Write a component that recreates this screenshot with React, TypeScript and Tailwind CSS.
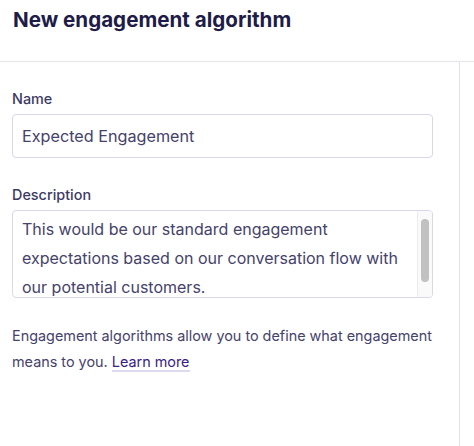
import React from "react";

const FONT = { fontFamily: "Inter, 'Noto Sans', sans-serif" };

export default function App() {
  return (
    <div className="flex h-[446px] w-[474px] flex-col overflow-hidden bg-white" style={FONT}>
      <header className="h-[62px] shrink-0 border-b border-[#e4e3ec] px-[13px] pt-[5px]">
        <h1 className="text-[20.6px] leading-[30px] font-bold text-[#201c47]">
          New engagement algorithm
        </h1>
      </header>

      <div className="flex flex-1">
        <main className="w-[460px] shrink-0 border-r border-[#e4e3ec] pt-[27px] pr-[26px] pl-[12px]">
          <label className="block text-[14.4px] leading-[20px] font-medium text-[#3d3a63]">
            Name
          </label>
          <div className="mt-[5px] flex h-[44px] items-center rounded-[4px] border border-[#d9d7ea] pl-[9px] text-[16.2px] text-[#45426b]">
            Expected Engagement
          </div>

          <label className="mt-[27px] block text-[14.4px] leading-[20px] font-medium text-[#3d3a63]">
            Description
          </label>
          <div className="relative mt-[5px] h-[88px] overflow-hidden rounded-[4px] border border-[#d9d7ea]">
            <div className="pt-[4px] pr-[20px] pl-[9px] text-[16px] leading-[29px] text-[#45426b]">
              <div>This would be our standard engagement</div>
              <div>expectations based on our conversation flow with</div>
              <div>our potential customers.</div>
            </div>
            <div className="absolute top-0 right-0 bottom-0 w-[15px] border-l border-[#ececec] bg-[#fafafa]">
              <div className="mx-auto mt-[8px] h-[63px] w-[8px] rounded-full bg-[#c1c1c1]" />
            </div>
          </div>

          <p className="mt-[25px] text-[14.4px] leading-[26px] text-[#45426b]">
            Engagement algorithms allow you to define what engagement means to you.{" "}
            <a href="#" className="border-b-2 border-[#dcdaf0] text-[#3a1d86]">
              Learn more
            </a>
          </p>
        </main>
      </div>
    </div>
  );
}
